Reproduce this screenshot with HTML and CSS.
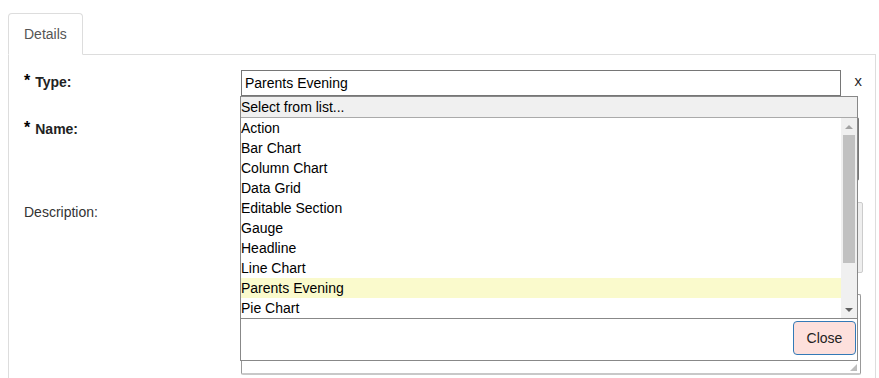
FILE: index.html
```html
<!DOCTYPE html>
<html lang="en">
<head>
  <meta charset="UTF-8" />
  <title>Details</title>
  <link rel="stylesheet" href="styles.css">
</head>
<body>
  <div class="page">
    <ul class="tabs">
      <li class="tab">Details</li>
    </ul>
    <div class="panel">
      <div class="form">
        <div class="row">
          <label class="label"><span class="star">*</span>Type:</label>
          <div class="field field-type">
            <input class="input" type="text" value="Parents Evening">
            <span class="clear">x</span>

            <div class="picker">
              <div class="picker-head">Select from list...</div>
              <div class="picker-body">
                <ul class="picker-list">
                  <li class="item">Action</li>
                  <li class="item">Bar Chart</li>
                  <li class="item">Column Chart</li>
                  <li class="item">Data Grid</li>
                  <li class="item">Editable Section</li>
                  <li class="item">Gauge</li>
                  <li class="item">Headline</li>
                  <li class="item">Line Chart</li>
                  <li class="item item-selected">Parents Evening</li>
                  <li class="item">Pie Chart</li>
                </ul>
                <div class="scrollbar">
                  <div class="arrow arrow-up"></div>
                  <div class="thumb"></div>
                  <div class="track"></div>
                  <div class="arrow arrow-down"></div>
                </div>
              </div>
              <div class="picker-foot">
                <button class="btn-close" type="button">Close</button>
              </div>
            </div>
          </div>
        </div>

        <div class="row">
          <label class="label"><span class="star">*</span>Name:</label>
          <div class="field">
            <div class="box box-name"></div>
          </div>
        </div>

        <div class="row">
          <label class="label label-plain">Description:</label>
          <div class="field">
            <div class="box box-desc"></div>
          </div>
        </div>

        <div class="row">
          <label class="label"></label>
          <div class="field">
            <div class="box box-text"><span class="grip"></span></div>
          </div>
        </div>
      </div>
    </div>
  </div>
</body>
</html>
```

FILE: styles.css
```css
* {
  box-sizing: border-box;
}
body {
  margin: 0;
  font-family: 'Liberation Sans', Arial, sans-serif;
  font-size: 14px;
  color: #333;
  background: #fff;
  overflow: hidden;
}
.page {
  padding: 13px 3px 0 8px;
}
.tabs {
  display: flex;
  margin: 0;
  padding: 0;
  list-style: none;
  border-bottom: 1px solid #ddd;
}
.tab {
  padding: 10px 15px;
  line-height: 20px;
  color: #555;
  background: #fff;
  border: 1px solid #ddd;
  border-bottom-color: transparent;
  border-radius: 4px 4px 0 0;
  margin-bottom: -1px;
}
.panel {
  min-height: 330px;
  padding: 15px 15px 0 15px;
  border-left: 1px solid #ddd;
  border-right: 1px solid #ddd;
}
.form {
  display: flex;
  flex-direction: column;
  gap: 21px;
}
.row {
  display: grid;
  grid-template-columns: 217px auto;
  align-items: start;
}
.label {
  padding-top: 4px;
  line-height: 17px;
  font-weight: bold;
  color: #222;
}
.label-plain {
  font-weight: normal;
  color: #333;
  padding-top: 2px;
}
.star {
  display: inline-block;
  vertical-align: top;
  font-size: 16px;
  line-height: 14px;
  margin-right: 5px;
  color: #000;
}
.field {
  position: relative;
}
.field-type {
  display: flex;
  align-items: center;
}
.input {
  width: 600px;
  height: 26px;
  margin: 0;
  padding: 0 3px;
  border: 1px solid #767676;
  font-family: 'Liberation Sans', Arial, sans-serif;
  font-size: 14px;
  color: #000;
  outline: none;
}
.clear {
  margin-left: 13px;
  font-family: 'Liberation Mono', monospace;
  font-size: 14px;
  color: #222;
  line-height: 14px;
  margin-top: -2px;
}
.box {
  border: 1px solid #aaa;
  border-radius: 2px;
}
.box-name {
  width: 618px;
  height: 64px;
  border-color: #777;
}
.box-desc {
  width: 622px;
  height: 71px;
  background: #eee;
  border-color: #ccc;
}
.box-text {
  position: relative;
  width: 620px;
  height: 81px;
  border-color: #999;
  border-bottom: 2px solid #c8c8c8;
}
.grip {
  position: absolute;
  right: 3px;
  bottom: 2px;
  width: 7px;
  height: 7px;
  background-image: radial-gradient(circle, #999 0.6px, transparent 0.9px);
  background-size: 2px 2px;
  clip-path: polygon(100% 0, 100% 100%, 0 100%);
}

/* dropdown picker */
.picker {
  position: absolute;
  left: -1px;
  top: 26px;
  z-index: 5;
  width: 618px;
  background: #fff;
  border: 1px solid #888;
  color: #000;
}
.picker-head {
  height: 21px;
  line-height: 20px;
  padding-left: 0;
  background: #f0f0f0;
  border-bottom: 1px solid #aaa;
}
.picker-body {
  display: flex;
  height: 200px;
}
.picker-list {
  flex: 1;
  margin: 0;
  padding: 0;
  list-style: none;
  overflow: hidden;
}
.item {
  height: 20px;
  line-height: 20px;
  padding-left: 0;
  white-space: nowrap;
}
.item-selected {
  background: #fafacc;
}
.scrollbar {
  display: flex;
  flex-direction: column;
  align-items: center;
  width: 16px;
  background: #f0f0f0;
}
.arrow {
  height: 17px;
  width: 16px;
  display: flex;
  align-items: center;
  justify-content: center;
}
.arrow::before {
  content: '';
  border-left: 4px solid transparent;
  border-right: 4px solid transparent;
}
.arrow-up::before {
  border-bottom: 4px solid #a3a3a3;
}
.arrow-down::before {
  border-top: 4px solid #606060;
}
.thumb {
  width: 12px;
  height: 128px;
  margin-left: -1px;
  background: #c1c1c1;
}
.track {
  flex: 1;
}
.picker-foot {
  display: flex;
  justify-content: flex-end;
  height: 42px;
  padding: 2px 1px 0 0;
  border-top: 1px solid #888;
}
.btn-close {
  width: 63px;
  height: 34px;
  padding: 0;
  font-family: 'Liberation Sans', Arial, sans-serif;
  font-size: 14px;
  color: #222;
  background: #fde0dc;
  border: 1px solid #337ab7;
  border-radius: 4px;
}
```
